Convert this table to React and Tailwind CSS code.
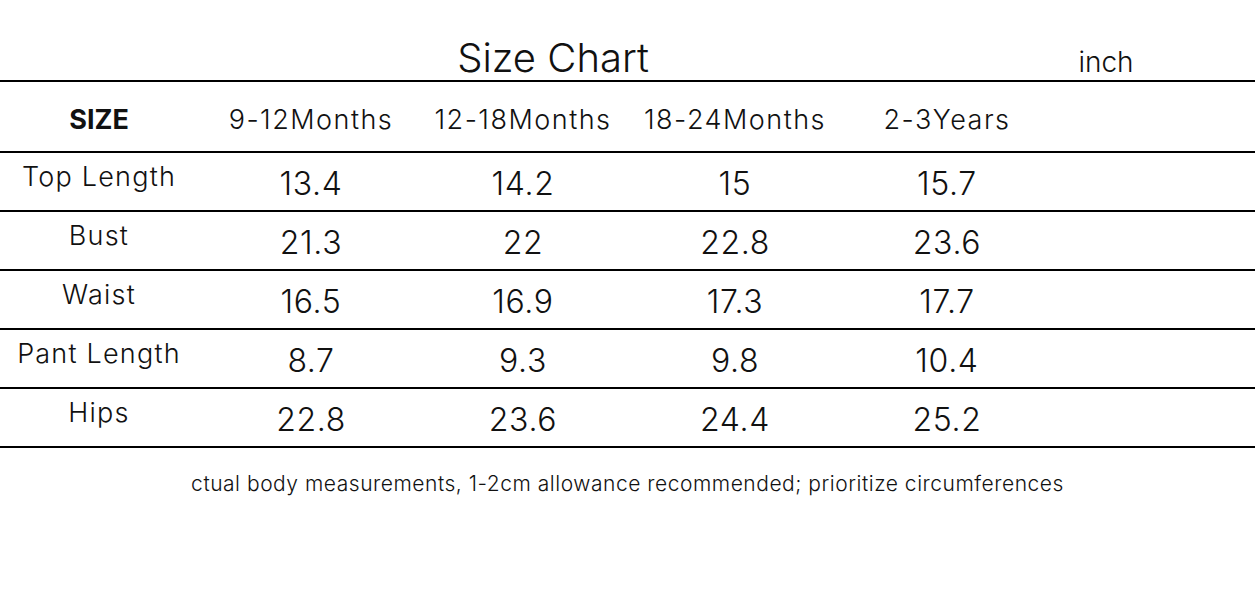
import React from "react";

const columns = ["9-12Months", "12-18Months", "18-24Months", "2-3Years"];

const rows = [
  { label: "Top Length", values: ["13.4", "14.2", "15", "15.7"] },
  { label: "Bust", values: ["21.3", "22", "22.8", "23.6"] },
  { label: "Waist", values: ["16.5", "16.9", "17.3", "17.7"] },
  { label: "Pant Length", values: ["8.7", "9.3", "9.8", "10.4"] },
  { label: "Hips", values: ["22.8", "23.6", "24.4", "25.2"] },
];

const font = { fontFamily: 'Inter, "Noto Sans", sans-serif' };

const SizeChart = () => {
  return (
    <div className="w-[1255px] h-[589px] bg-white text-[#111] font-light" style={font}>
      {/* title */}
      <div className="flex items-end h-[80px]">
        <div className="w-[400px] ml-[353px] text-center text-[40px] leading-none pb-[2px]">Size Chart</div>
        <div className="w-[200px] ml-[253px] text-center text-[28px] leading-none pb-[4px]">inch</div>
      </div>

      <div className="border-t-2 border-black grid grid-cols-[198px_226px_198px_226px_198px_1fr] h-[71px] items-center pt-[7px]">
        <div className="text-center text-[27px] font-bold">SIZE</div>
        {columns.map((c) => (
          <div key={c} className="text-center text-[27px] tracking-[0.055em]">{c}</div>
        ))}
      </div>

      {rows.map((r, i) => (
        <div
          key={r.label}
          className={
            "border-t-2 border-black grid grid-cols-[198px_226px_198px_226px_198px_1fr] h-[59px] items-center" +
            (i === rows.length - 1 ? " border-b-2 h-[61px]" : "")
          }
        >
          <div className="text-center text-[27px] tracking-[0.045em] pb-[8px]">{r.label}</div>
          {r.values.map((v, j) => (
            <div key={j} className="text-center text-[32px] tracking-[0.02em] pt-[4px]">{v}</div>
          ))}
        </div>
      ))}

      <p className="text-center text-[21px] tracking-[0.025em] mt-[20px]">
        ctual body measurements, 1-2cm allowance recommended; prioritize circumferences
      </p>
    </div>
  );
};

export default SizeChart;
